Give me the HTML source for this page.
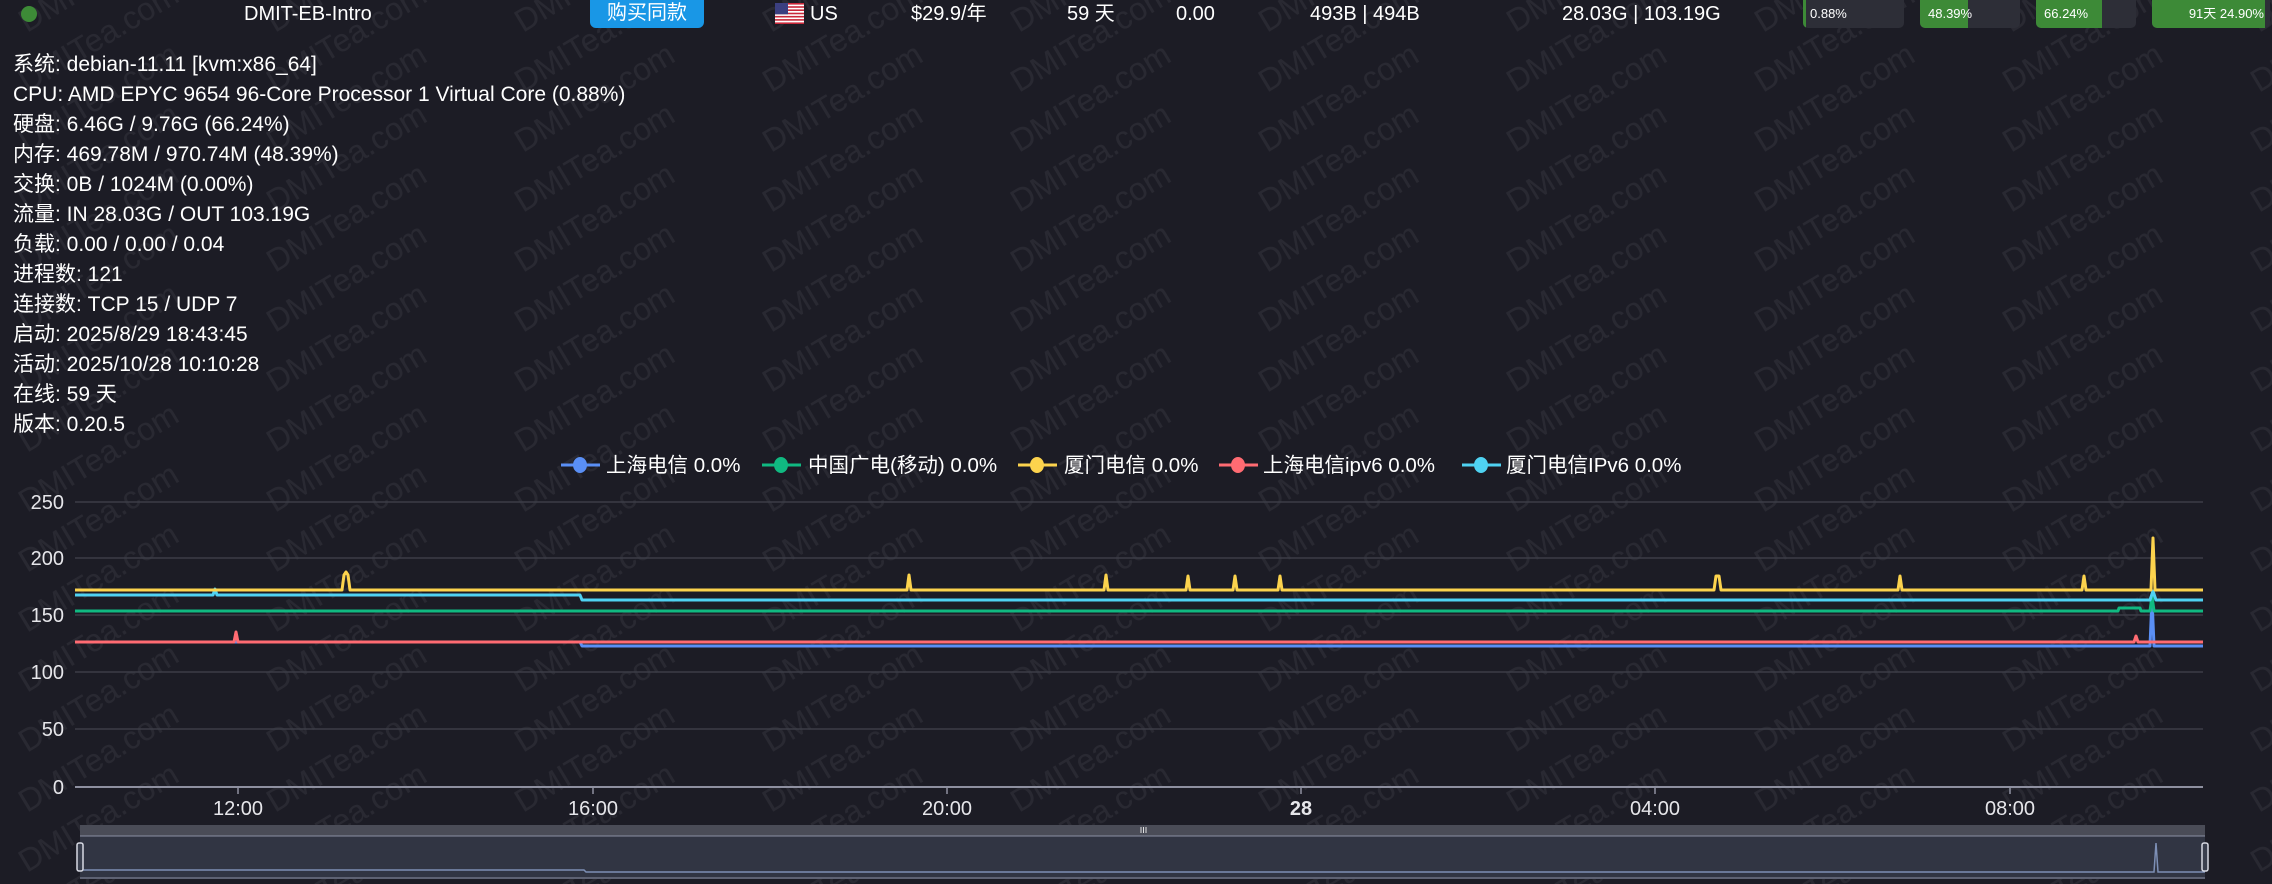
<!DOCTYPE html>
<html><head><meta charset="utf-8">
<style>
html,body{margin:0;padding:0;background:#1c1c25;width:2272px;height:884px;overflow:hidden;}
body{position:relative;font-family:"Liberation Sans","Noto Sans CJK SC",sans-serif;color:#fff;}
.t{position:absolute;top:0;line-height:28px;font-size:20px;white-space:nowrap;}
.info{position:absolute;left:13px;top:50px;font-size:21px;line-height:30px;white-space:nowrap;}
.bar{position:absolute;top:0;height:28px;background:#2d2e37;border-radius:0 0 5px 5px;overflow:hidden;font-size:13px;line-height:28px;}
.bar .f{position:absolute;left:0;top:0;bottom:0;background:#3d8a37;}
.bar span{position:relative;padding-left:8px;}
</style></head><body>
<svg style="position:absolute;left:0;top:0" width="2272" height="884">
<defs>
<pattern id="wm" patternUnits="userSpaceOnUse" x="0" y="0" width="248" height="120">
<g font-family="Liberation Sans, sans-serif" font-size="32" fill="rgba(255,255,255,0.06)">
<text x="27" y="33" transform="rotate(-31 27 33)">DMITea.com</text>
<text x="27" y="93" transform="rotate(-31 27 93)">DMITea.com</text>
<text x="27" y="153" transform="rotate(-31 27 153)">DMITea.com</text>
<text x="27" y="213" transform="rotate(-31 27 213)">DMITea.com</text>
</g>
</pattern>
</defs>
<rect width="2272" height="884" fill="url(#wm)"/>
<g stroke="#3c3d47" stroke-width="1.5">
<line x1="75" y1="502" x2="2203" y2="502"/>
<line x1="75" y1="558" x2="2203" y2="558"/>
<line x1="75" y1="615" x2="2203" y2="615"/>
<line x1="75" y1="672" x2="2203" y2="672"/>
<line x1="75" y1="729" x2="2203" y2="729"/>
</g>
<line x1="75" y1="787" x2="2203" y2="787" stroke="#8e90a0" stroke-width="2"/>
<g stroke="#8e90a0" stroke-width="1.5">
<line x1="238" y1="787" x2="238" y2="794"/><line x1="593" y1="787" x2="593" y2="794"/>
<line x1="947" y1="787" x2="947" y2="794"/><line x1="1301" y1="787" x2="1301" y2="794"/>
<line x1="1655" y1="787" x2="1655" y2="794"/><line x1="2010" y1="787" x2="2010" y2="794"/>
</g>
<g font-family="Liberation Sans, sans-serif" font-size="20" fill="#e6e6ea" text-anchor="end">
<text x="64" y="509">250</text><text x="64" y="565">200</text><text x="64" y="622">150</text>
<text x="64" y="679">100</text><text x="64" y="736">50</text><text x="64" y="794">0</text>
</g>
<g font-family="Liberation Sans, sans-serif" font-size="20" fill="#e6e6ea" text-anchor="middle">
<text x="238" y="815">12:00</text><text x="593" y="815">16:00</text><text x="947" y="815">20:00</text>
<text x="1301" y="815" font-weight="bold">28</text><text x="1655" y="815">04:00</text><text x="2010" y="815">08:00</text>
</g>
<g fill="none" stroke-width="3" stroke-linejoin="round">
<polyline stroke="#5a8ff5" points="75,642 580,642 582,646 2150,646 2152,598 2154,646 2203,646"/>
<polyline stroke="#ff6b72" points="75,642 234,642 236,632 238,642 2134,642 2136,636 2138,642 2203,642"/>
<polyline stroke="#10b981" points="75,611 2118,611 2119,608 2140,608 2141,611 2150,611 2152,596 2154,611 2203,611"/>
<polyline stroke="#4fd2f2" points="75,595 213,595 215,589 217,595 580,595 582,600 2150,600 2153,591 2156,600 2203,600"/>
<polyline stroke="#fcd34d" points="75,590 342,590 344,575 346,572 348,575 350,590 907,590 909,575 911,590 1104,590 1106,575 1108,590 1186,590 1188,576 1190,590 1233,590 1235,576 1237,590 1278,590 1280,576 1282,590 1714,590 1716,576 1719,576 1721,590 1898,590 1900,576 1902,590 2082,590 2084,576 2086,590 2151,590 2153,538 2155,590 2203,590"/>
</g>
<g font-family="Liberation Sans, Noto Sans CJK SC, sans-serif" font-size="20.5" fill="#fff">
<line x1="561" y1="465" x2="600" y2="465" stroke="#5a8ff5" stroke-width="3"/><ellipse cx="580" cy="465" rx="7" ry="8" fill="#5a8ff5"/>
<text x="606" y="472">上海电信 0.0%</text>
<line x1="762" y1="465" x2="801" y2="465" stroke="#10b981" stroke-width="3"/><ellipse cx="781" cy="465" rx="7" ry="8" fill="#10b981"/>
<text x="808" y="472">中国广电(移动) 0.0%</text>
<line x1="1018" y1="465" x2="1057" y2="465" stroke="#fcd34d" stroke-width="3"/><ellipse cx="1037" cy="465" rx="7" ry="8" fill="#fcd34d"/>
<text x="1064" y="472">厦门电信 0.0%</text>
<line x1="1219" y1="465" x2="1258" y2="465" stroke="#ff6b72" stroke-width="3"/><ellipse cx="1238" cy="465" rx="7" ry="8" fill="#ff6b72"/>
<text x="1263" y="472">上海电信ipv6 0.0%</text>
<line x1="1462" y1="465" x2="1501" y2="465" stroke="#4fd2f2" stroke-width="3"/><ellipse cx="1481" cy="465" rx="7" ry="8" fill="#4fd2f2"/>
<text x="1506" y="472">厦门电信IPv6 0.0%</text>
</g>
<rect x="80" y="825" width="2125" height="11" fill="#4a4c57"/>
<rect x="80" y="836" width="2125" height="43" fill="#313543"/>
<line x1="80" y1="836" x2="2205" y2="836" stroke="#8a8fa3" stroke-width="1"/>
<line x1="80" y1="878" x2="2205" y2="878" stroke="#8a8fa3" stroke-width="1"/>
<polyline fill="none" stroke="#7d8fb5" stroke-width="1.5" points="80,870 584,870 586,872 2154,872 2156,843 2158,872 2205,872"/>
<rect x="77" y="843" width="6" height="28" rx="2" fill="#3a3f4e" stroke="#d8dae3" stroke-width="1.5"/>
<rect x="2202" y="843" width="6" height="28" rx="2" fill="#3a3f4e" stroke="#d8dae3" stroke-width="1.5"/>
<g stroke="#e0e0e0" stroke-width="1"><line x1="1141" y1="827" x2="1141" y2="833"/><line x1="1143.5" y1="827" x2="1143.5" y2="833"/><line x1="1146" y1="827" x2="1146" y2="833"/></g>
<circle cx="29" cy="14" r="8" fill="#3d8b37"/>
<g transform="translate(775,3)">
<rect width="29" height="21" fill="#fff"/>
<g fill="#c8283a"><rect y="0" width="29" height="1.6"/><rect y="3.2" width="29" height="1.6"/><rect y="6.4" width="29" height="1.6"/><rect y="9.7" width="29" height="1.6"/><rect y="12.9" width="29" height="1.6"/><rect y="16.1" width="29" height="1.6"/><rect y="19.4" width="29" height="1.6"/></g>
<rect width="13" height="11.3" fill="#3b3f80"/>
</g>
</svg>

<div class="t" style="left:244px">DMIT-EB-Intro</div>
<div style="position:absolute;left:590px;top:0;width:114px;height:28px;background:#1997e6;border-radius:0 0 6px 6px;font-size:20px;line-height:27px;text-align:center;">购买同款</div>
<div class="t" style="left:810px">US</div>
<div class="t" style="left:911px">$29.9/年</div>
<div class="t" style="left:1067px">59 天</div>
<div class="t" style="left:1176px">0.00</div>
<div class="t" style="left:1310px">493B | 494B</div>
<div class="t" style="left:1562px">28.03G | 103.19G</div>

<div class="bar" style="left:1803px;width:101px"><div class="f" style="width:3px"></div><span style="padding-left:7px">0.88%</span></div>
<div class="bar" style="left:1920px;width:100px"><div class="f" style="width:48px"></div><span>48.39%</span></div>
<div class="bar" style="left:2036px;width:100px"><div class="f" style="width:66px"></div><span>66.24%</span></div>
<div class="bar" style="left:2152px;width:118px"><div class="f" style="width:113px"></div><span style="position:absolute;right:6px;padding:0">91天 24.90%</span></div>

<div class="info">
系统: debian-11.11 [kvm:x86_64]<br>
CPU: AMD EPYC 9654 96-Core Processor 1 Virtual Core (0.88%)<br>
硬盘: 6.46G / 9.76G (66.24%)<br>
内存: 469.78M / 970.74M (48.39%)<br>
交换: 0B / 1024M (0.00%)<br>
流量: IN 28.03G / OUT 103.19G<br>
负载: 0.00 / 0.00 / 0.04<br>
进程数: 121<br>
连接数: TCP 15 / UDP 7<br>
启动: 2025/8/29 18:43:45<br>
活动: 2025/10/28 10:10:28<br>
在线: 59 天<br>
版本: 0.20.5
</div>
</body></html>
